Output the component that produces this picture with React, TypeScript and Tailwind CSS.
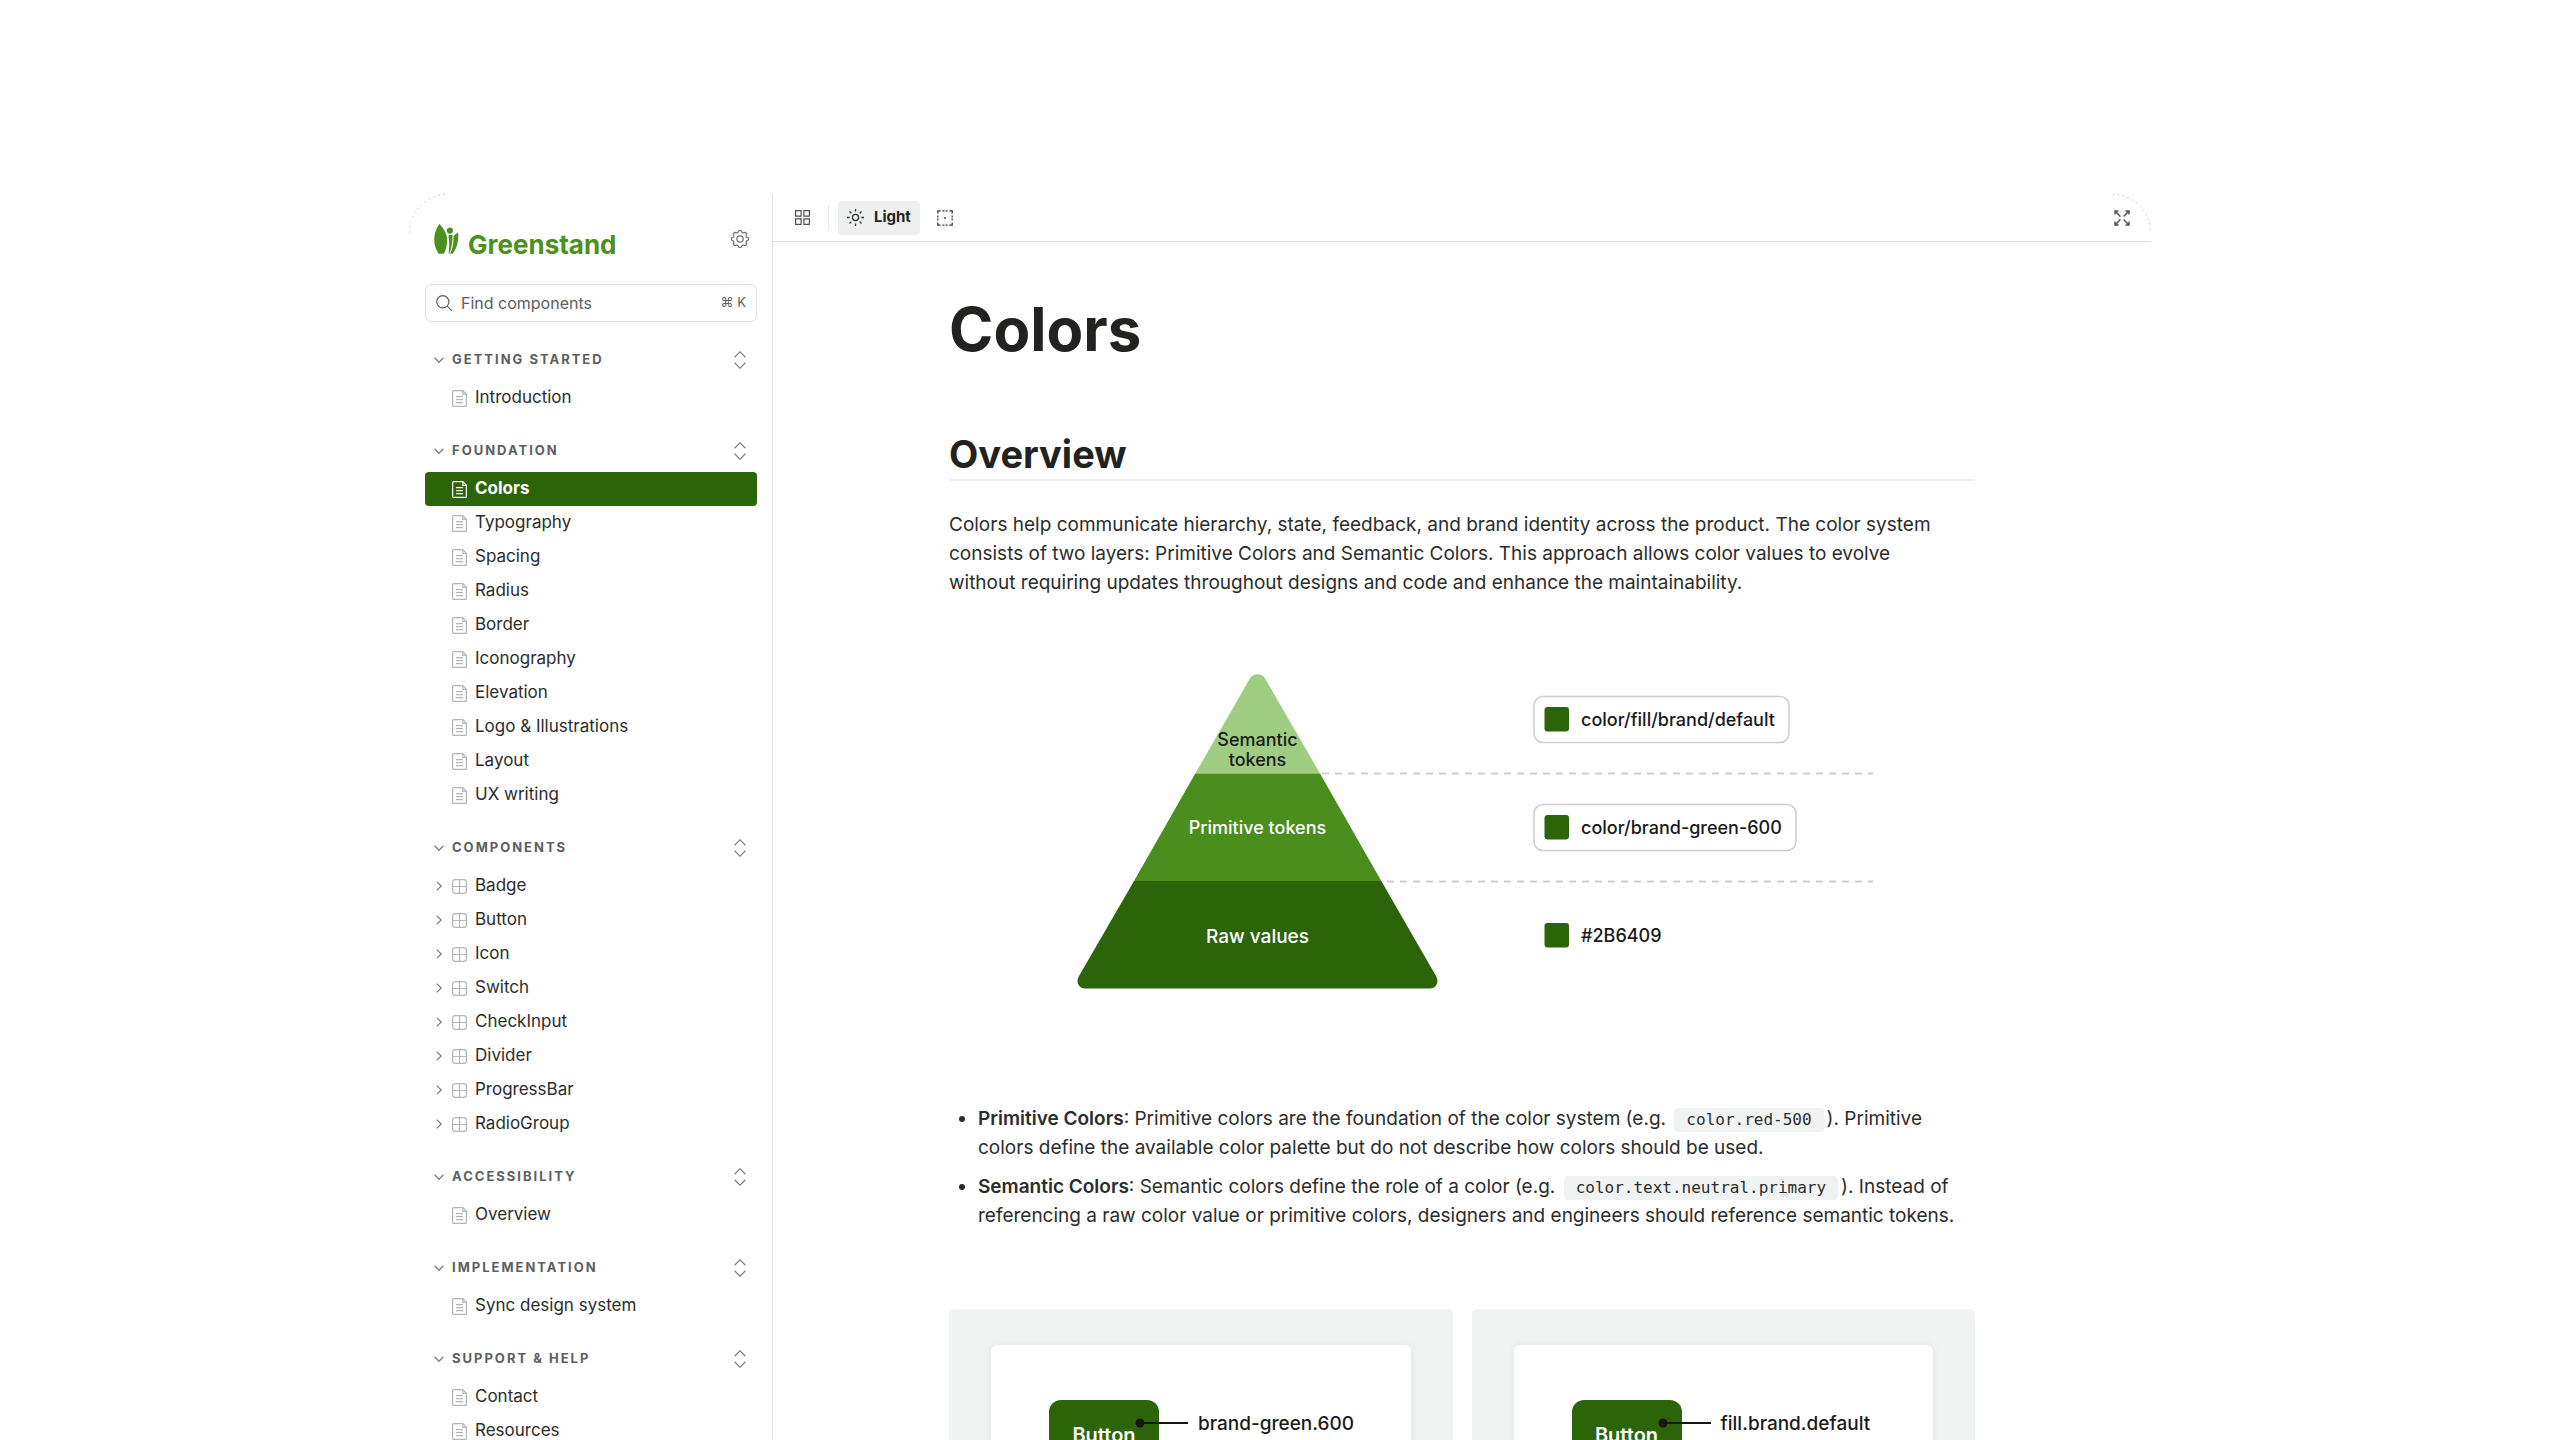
import type { ReactNode } from "react";

type Section = { title: string; kind: "doc" | "component"; items: string[] };

const sections: Section[] = [
  { title: "Getting started", kind: "doc", items: ["Introduction"] },
  {
    title: "Foundation",
    kind: "doc",
    items: [
      "Colors",
      "Typography",
      "Spacing",
      "Radius",
      "Border",
      "Iconography",
      "Elevation",
      "Logo & Illustrations",
      "Layout",
      "UX writing",
    ],
  },
  {
    title: "Components",
    kind: "component",
    items: ["Badge", "Button", "Icon", "Switch", "CheckInput", "Divider", "ProgressBar", "RadioGroup"],
  },
  { title: "Accessibility", kind: "doc", items: ["Overview"] },
  { title: "Implementation", kind: "doc", items: ["Sync design system"] },
  { title: "Support & help", kind: "doc", items: ["Contact", "Resources"] },
];

const tokens = [
  { label: "color/fill/brand/default", y: 22, width: 255 },
  { label: "color/brand-green-600", y: 130, width: 262 },
  { label: "#2B6409", y: 238, width: 0 },
];

const usages = ["brand-green.600", "fill.brand.default"];

// scalloped outline with eight teeth
const gearPath =
  Array.from({ length: 96 }, (_, i) => {
    const a = (i / 96) * Math.PI * 2;
    const r = 7.7 + 0.9 * Math.tanh(2 * Math.cos(8 * a));
    return `${i ? "L" : "M"}${(9 + r * Math.cos(a)).toFixed(2)} ${(9 + r * Math.sin(a)).toFixed(2)}`;
  }).join("") + "Z";

function LeafLogo() {
  return (
    <svg width="25" height="30" viewBox="0 0 25 30" fill="#4c9120" aria-hidden="true">
      <path d="M5.3 0C9.5 4.2 12.8 9.2 13.1 15.5c.2 5-1 9.5-3 14.3H4.6C1.700 25.500.2 20.500.2 15.500.2 9.500 2.200 4.500 5.300 0Z" />
      <circle cx="15.9" cy="6.6" r="3.1" />
      <path d="M14.400 11.600c1.200-.8 2.700-.9 4-.6.3 6.500-.6 12.700-3.200 18.800h-.6c.8-6 .8-12.200-.2-18.200Z" />
      <path d="M24.200 8.500c.5 8-.9 15.500-5.700 21.300h-2.300c2.500-5.500 3.500-11 3.300-17.300 1.200-1.700 2.800-3.100 4.700-4Z" />
    </svg>
  );
}

function Chevron({ open }: { open?: boolean }) {
  return (
    <svg width="10" height="10" viewBox="0 0 10 10" fill="none" stroke="#7d8180" strokeWidth="1.3" aria-hidden="true">
      {open ? <path d="M.6 2.700 5 7.200l4.400-4.500" /> : <path d="M2.700.6 7.200 5 2.700 9.400" />}
    </svg>
  );
}

function DocIcon({ active }: { active: boolean }) {
  return (
    <svg
      width="15"
      height="17"
      viewBox="0 0 15 17"
      fill="none"
      strokeWidth="1.2"
      className={active ? "stroke-white" : "stroke-[#b4b7b6]"}
      aria-hidden="true"
    >
      <path d="M1.600.6h9.200l3.600 3.600v11.200a1 1 0 0 1-1 1H1.600a1 1 0 0 1-1-1V1.600a1 1 0 0 1 1-1Z" />
      <path d="M10.800.8v3.600h3.500M4 6.700h7M4 9.700h7M4 12.700h7" />
    </svg>
  );
}

function ComponentIcon() {
  return (
    <svg width="15" height="15" viewBox="0 0 15 15" fill="none" stroke="#b4b7b6" strokeWidth="1.2" aria-hidden="true">
      <rect x=".6" y=".6" width="13.800" height="13.800" rx="2.600" />
      <path d="M7.500.6v13.800M.6 7.500h13.800" />
    </svg>
  );
}

function ToolButton({ label, children }: { label: string; children: ReactNode }) {
  return (
    <button aria-label={label} className="flex size-[34px] items-center justify-center rounded">
      {children}
    </button>
  );
}

function Sidebar() {
  return (
    <aside className="w-[364px] shrink-0 border-r border-[#e0e2e1] pt-[30px] pr-[15px] pl-4">
      <div className="flex justify-between">
        <a href="#" className="ml-[9px] flex h-[30px] items-baseline gap-[9px] text-[26px] leading-none font-bold text-[#4c9120]">
          <LeafLogo />
          Greenstand
        </a>
        <button aria-label="Settings" className="mr-2 flex h-[30px] items-center">
          <svg width="18" height="18" viewBox="0 0 18 18" fill="none" stroke="#6b6f6e" strokeWidth="1.2">
            <path d={gearPath} />
            <circle cx="9" cy="9" r="3.200" />
          </svg>
        </button>
      </div>

      <label className="mt-[30px] flex h-[38px] items-center rounded-md border border-[#dfe2e1] px-[10px] text-[#5c605f]">
        <svg width="16" height="16" viewBox="0 0 16 16" fill="none" stroke="#5c605f" strokeWidth="1.200" aria-hidden="true">
          <circle cx="6.800" cy="6.800" r="6.100" />
          <path d="m11.200 11.200 4.400 4.400" />
        </svg>
        <input
          type="text"
          aria-label="Find components"
          placeholder="Find components"
          className="ml-[9px] min-w-0 flex-1 text-[16px] outline-none placeholder:text-[#5c605f]"
        />
        <kbd className="font-['Inter','DejaVu_Sans',sans-serif] text-[13px]">⌘ K</kbd>
      </label>

      <nav className="pt-0.5">
        {sections.map((section) => (
          <section key={section.title} className="mt-6">
            <div className="mb-[10px] flex h-[23px] items-center justify-between">
              <button className="flex items-center gap-2 pl-[9px] text-[13px] font-bold tracking-[2px] text-[#5c605f] uppercase">
                <Chevron open />
                {section.title}
              </button>
              <button aria-label={`Expand ${section.title}`} className="mr-[11px]">
                <svg width="12" height="18" viewBox="0 0 12 18" fill="none" stroke="#7d8180" strokeWidth="1.200">
                  <path d="M.6 6.200 6 .9l5.400 5.300M.6 11.800 6 17.100l5.400-5.300" />
                </svg>
              </button>
            </div>
            <ul>
              {section.items.map((item) => {
                const active = item === "Colors";
                return (
                  <li key={item}>
                    <a
                      href="#"
                      className={`flex h-[34px] items-center rounded pl-[9px] text-[17px] ${
                        active ? "bg-[#2b6409] font-bold text-white" : "text-[#2b2d2c]"
                      }`}
                    >
                      <span className="mr-2 w-[10px]">{section.kind === "component" && <Chevron />}</span>
                      {section.kind === "component" ? <ComponentIcon /> : <DocIcon active={active} />}
                      <span className="ml-2">{item}</span>
                    </a>
                  </li>
                );
              })}
            </ul>
          </section>
        ))}
      </nav>
    </aside>
  );
}

function Toolbar() {
  return (
    <div className="flex h-12 items-center border-b border-[#e0e2e1] px-3">
      <ToolButton label="Grid">
        <svg width="15" height="15" viewBox="0 0 15 15" fill="none" stroke="#4d5150" strokeWidth="1.200">
          <path d="M.6.6h5.500v5.500H.6zM8.900.6h5.500v5.500H8.900zM.6 8.900h5.500v5.500H.6zM8.900 8.900h5.500v5.500H8.900z" />
        </svg>
      </ToolButton>
      <span className="mx-[9px] h-6 w-px bg-[#e8eae9]" />
      <button className="flex h-[34px] items-center gap-[10px] rounded bg-[#edf0ef] px-[9px] text-[15px] font-bold text-[#222]">
        <svg width="17" height="17" viewBox="0 0 17 17" fill="none" stroke="#333" strokeWidth="1.300">
          <circle cx="8.500" cy="8.500" r="3.100" />
          <path d="M8.500 0v2.600M8.500 14.400V17M0 8.500h2.600M14.400 8.500H17M2.500 2.500l1.800 1.800M12.700 12.700l1.800 1.800M2.500 14.500l1.800-1.800M12.700 4.300l1.800-1.800" />
        </svg>
        Light
      </button>
      <div className="ml-2">
        <ToolButton label="Outline">
          <svg width="16" height="16" viewBox="0 0 16 16" fill="none" stroke="#333" strokeWidth="1.200">
            <path d="M.8 3.600V.8h2.800M12.400.8h2.800v2.800M15.200 12.400v2.800h-2.800M3.600 15.200H.8v-2.800M5.500.8h1.900M8.600.8h1.900M5.500 15.200h1.900M8.600 15.200h1.900M.8 5.500v1.900M.8 8.600v1.900M15.200 5.500v1.900M15.200 8.600v1.900" />
            <circle cx="8" cy="8" r=".9" fill="#333" stroke="none" />
          </svg>
        </ToolButton>
      </div>
      <div className="ml-auto">
        <ToolButton label="Full screen">
          <svg width="16" height="16" viewBox="0 0 16 16" fill="none" stroke="#4d5150" strokeWidth="1.400">
            <path d="M1 4.500V1h3.500M1 1l5.400 5.400M11.500 1H15v3.500M15 1 9.600 6.400M15 11.500V15h-3.500M15 15 9.600 9.600M4.500 15H1v-3.500M1 15l5.400-5.400" />
          </svg>
        </ToolButton>
      </div>
    </div>
  );
}

function TokenPyramid() {
  return (
    <svg viewBox="0 0 1026 315" className="w-full text-[18px] font-medium" role="img" aria-label="Token layers">
      <path d="M246.300 99.500 300.300 5.500C303-1.500 314-1.500 316.700 5.500L371 99.500Z" fill="#9fce82" />
      <path d="M246.300 99.500H371L432.300 207H185Z" fill="#4a8f1e" />
      <path d="M185 207H432.300L487 302C490.500 308 487 314.400 481 314.400H136C130 314.400 126.500 308 130 302Z" fill="#2b6409" />
      <g stroke="#cdcfce" strokeWidth="2" strokeDasharray="7 6">
        <path d="M373 99.500H924" />
        <path d="M438 207.500H924" />
      </g>
      <g textAnchor="middle">
        <text x="308.500" y="72" fill="#1a1a1a">Semantic</text>
        <text x="308.500" y="92" fill="#1a1a1a">tokens</text>
        <text x="308.500" y="160" fill="#fff">Primitive tokens</text>
        <text x="308.500" y="269" fill="#fff" className="text-[19px]">Raw values</text>
      </g>
      {tokens.map((token) => (
        <g key={token.label}>
          {token.width > 0 && (
            <rect x="585" y={token.y + 0.5} width={token.width} height="46" rx="9" fill="#fff" stroke="#cdcfce" strokeWidth="1.500" />
          )}
          <rect x="595.500" y={token.y + 11} width="24.500" height="24.500" rx="3" fill="#2b6409" />
          <text x="632" y={token.y + 30} fill="#1a1a1a">
            {token.label}
          </text>
        </g>
      ))}
    </svg>
  );
}

function Code({ children }: { children: ReactNode }) {
  return (
    <code className="mr-[3px] ml-[3px] inline-block rounded bg-[#f1f3f2] px-3 align-middle font-['DejaVu_Sans_Mono',monospace] text-[16px] leading-6">
      {children}
    </code>
  );
}

function UsageCard({ label }: { label: string }) {
  return (
    <div className="rounded-[5px] bg-[#f1f3f2] px-[42px] py-9">
      <div className="flex items-start rounded-md bg-white pt-[55px] pb-14 pl-[58px] shadow-[0_0_8px_rgba(0,0,0,0.06)]">
        <button className="h-[70px] w-[110px] rounded-xl bg-[#2b6409] text-[20px] font-semibold text-white">Button</button>
        <div className="z-10 mt-[13px] -ml-6 flex h-5 items-center gap-[10px] text-[19px] font-medium text-[#1a1a1a]">
          <svg width="53" height="10" viewBox="0 0 53 10" fill="#14180f" aria-hidden="true">
            <circle cx="5" cy="5" r="4.500" />
            <path d="M5 4h48v2H5z" />
          </svg>
          {label}
        </div>
      </div>
    </div>
  );
}

export default function App() {
  return (
    <div className="h-screen overflow-hidden bg-[#fefefe] pt-[194px] font-['Inter',sans-serif]">
      <div className="relative mx-auto flex w-full max-w-[1742px]">
        {/* rounded window corners */}
        <svg className="absolute top-0 left-0" width="40" height="40" fill="none" stroke="#d0d2d1" strokeDasharray="2 3" aria-hidden="true">
          <path d="M.5 38.500a38 38 0 0 1 38-38" />
        </svg>
        <svg className="absolute top-0 right-0" width="40" height="40" fill="none" stroke="#d0d2d1" strokeDasharray="2 3" aria-hidden="true">
          <path d="M1.500.5a38 38 0 0 1 38 38" />
        </svg>

        <Sidebar />

        <div className="min-w-0 flex-1">
          <Toolbar />
          <main className="mx-auto w-full max-w-[1026px] text-[19px] leading-[29px] text-[#2b2d2c]">
            <h1 className="mt-[52px] text-[60px] leading-[70px] font-bold text-[#222321]">Colors</h1>
            <h2 className="mt-[66px] border-b-2 border-[#f0f1f1] text-[38px] leading-[49px] font-bold text-[#222321]">
              Overview
            </h2>
            <p className="mt-[29px] max-w-[1000px]">
              Colors help communicate hierarchy, state, feedback, and brand identity across the product. The color system
              consists of two layers: Primitive Colors and Semantic Colors. This approach allows color values to evolve
              without requiring updates throughout designs and code and enhance the maintainability.
            </p>

            <div className="mt-[77px]">
              <TokenPyramid />
            </div>

            <ul className="mt-[115px] list-disc space-y-[10px] pl-[29px]">
              <li>
                <strong className="font-semibold">Primitive Colors</strong>: Primitive colors are the foundation of the
                color system (e.g. <Code>color.red-500</Code>). Primitive colors define the available color palette but
                do not describe how colors should be used.
              </li>
              <li>
                <strong className="font-semibold">Semantic Colors</strong>: Semantic colors define the role of a color
                (e.g. <Code>color.text.neutral.primary</Code>). Instead of referencing a raw color value or primitive
                colors, designers and engineers should reference semantic tokens.
              </li>
            </ul>

            <div className="mt-[79px] grid grid-cols-2 gap-[19px]">
              {usages.map((label) => (
                <UsageCard key={label} label={label} />
              ))}
            </div>
          </main>
        </div>
      </div>
    </div>
  );
}
